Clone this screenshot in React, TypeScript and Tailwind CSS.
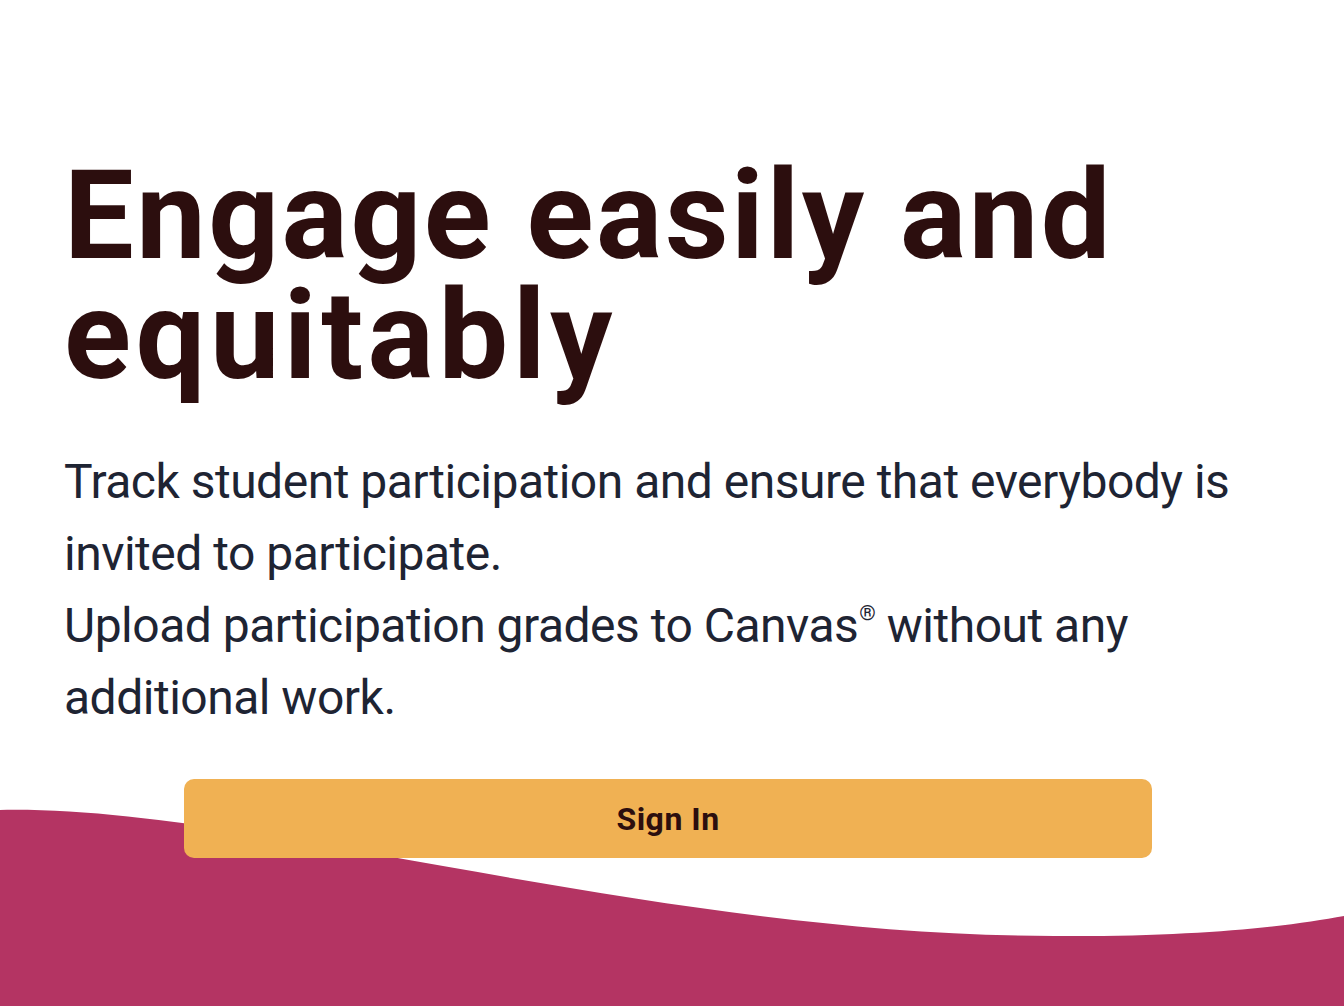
export default function App() {
  return (
    <div className="relative bg-white w-full h-[1006px] overflow-hidden">
      <svg
        className="absolute left-0 top-0 w-[1344px] h-[1006px] pointer-events-none"
        viewBox="0 0 1344 1006"
        preserveAspectRatio="none"
      >
        <path
          d="M0 810 C250 805 650 935 1054 936 C1200 937 1290 926 1344 916 L1344 1006 L0 1006 Z"
          fill="#b43463"
        />
      </svg>
      <div className="relative z-10 flex flex-col px-16 pt-[156px]">
        <h1
          className="text-[124px] leading-[120px] font-bold tracking-[2.5px] text-[#2c0e0e]"
          style={{ fontFamily: "Roboto, 'Liberation Sans', sans-serif" }}
        >
          Engage easily and
          <br />
          <span className="tracking-[4.5px]">equitably</span>
        </h1>
        <div
          className="mt-[50px] text-[48px] leading-[72px] font-normal tracking-[-0.5px] text-[#1e2433]"
          style={{ fontFamily: "Roboto, 'Liberation Sans', sans-serif" }}
        >
          <p>Track student participation and ensure that everybody is invited to participate.</p>
          <p>
            Upload participation grades to Canvas
            <span className="inline-block text-[21px] leading-none align-[22px] ml-[1px]">®</span> without any additional work.
          </p>
        </div>
        <button
          className="mt-[45px] ml-[120px] w-[968px] h-[79px] rounded-[10px] bg-[#f0b153] flex items-center justify-center text-[32px] font-bold tracking-[0.5px] text-[#2c0e0e]"
          style={{ fontFamily: "Roboto, 'Liberation Sans', sans-serif" }}
        >
          Sign In
        </button>
      </div>
    </div>
  );
}
